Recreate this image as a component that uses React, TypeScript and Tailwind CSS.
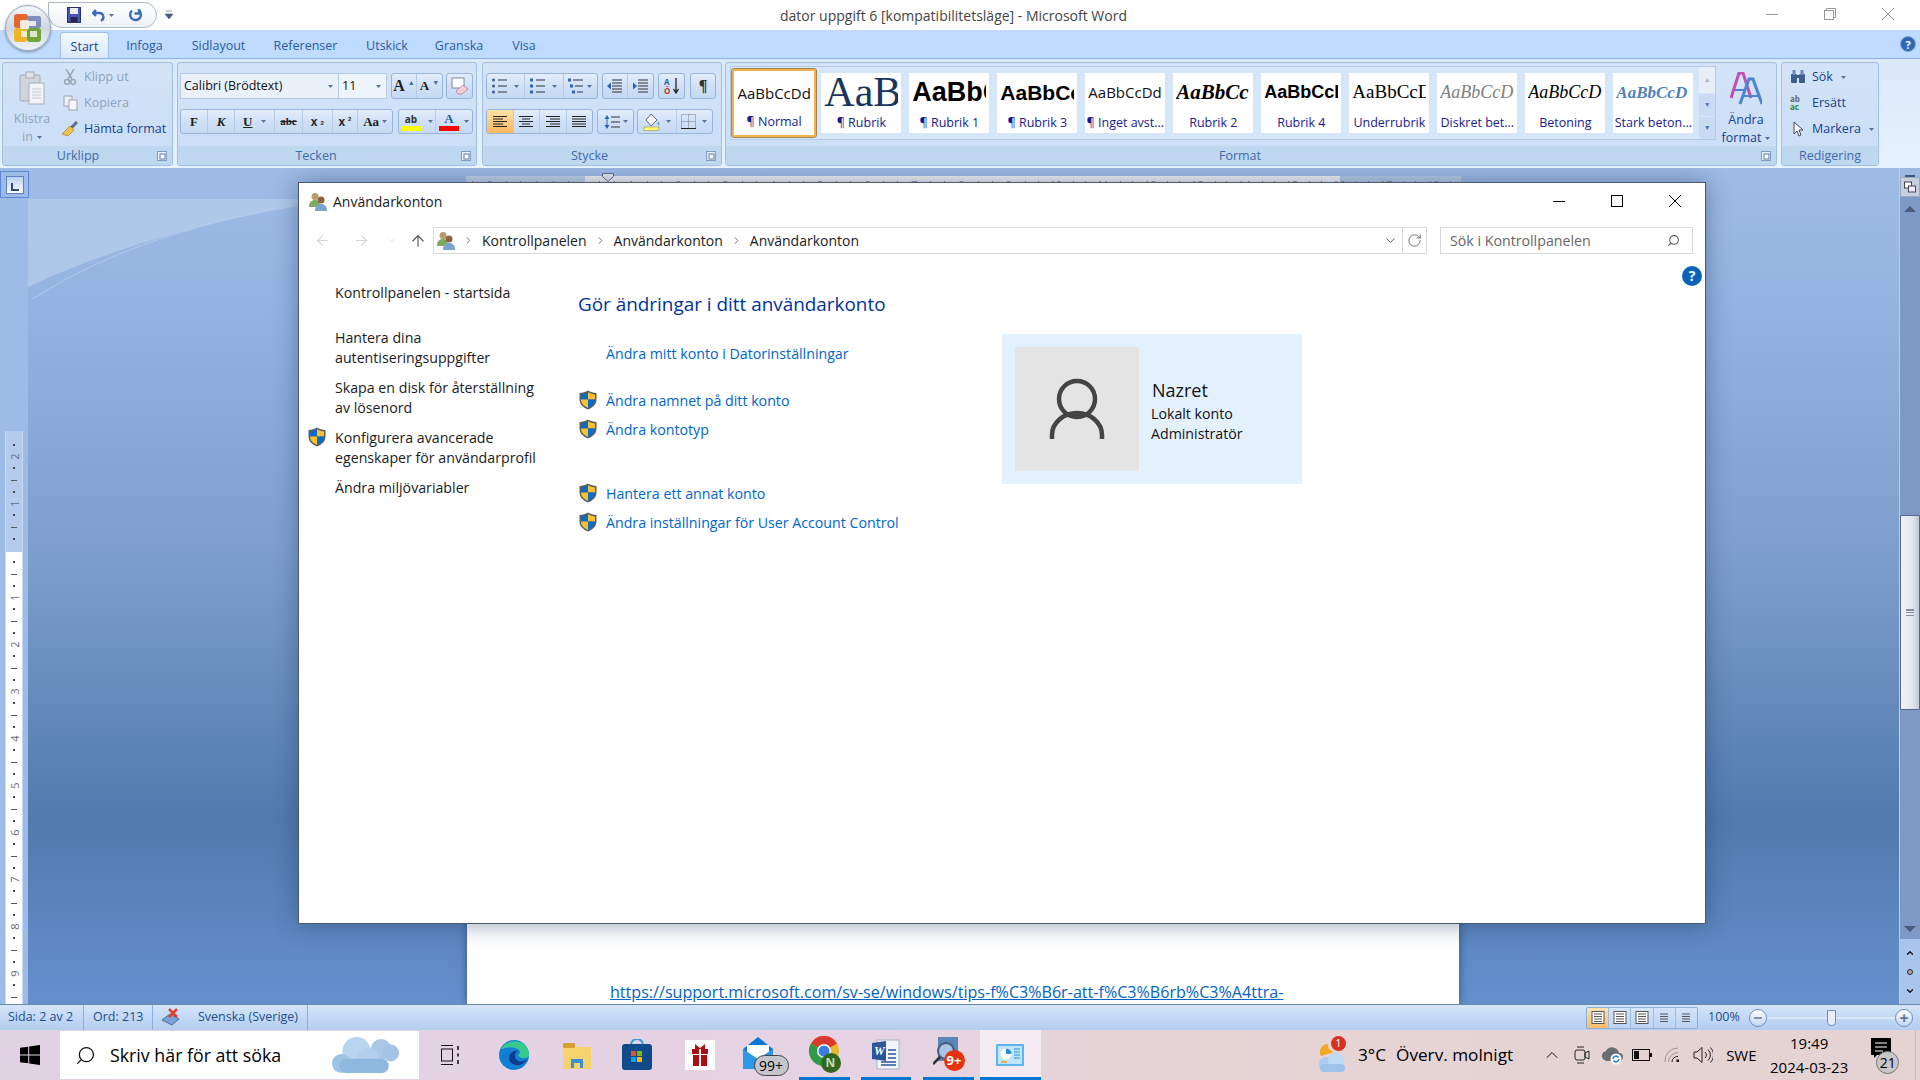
import React from 'react';
import { ArrowLeft, ArrowRight, ArrowUp, ChevronDown, ChevronRight, ChevronUp, Minus, RotateCw, Search } from 'lucide-react';

const Arrow = ({ className = '' }: { className?: string }) => (
  <svg width="5" height="3" viewBox="0 0 5 3" className={className}><path d="M0 0h5L2.5 3z" fill="#56739c" /></svg>
);

const CaptionMin = ({ color }: { color: string }) => (
  <svg width="12" height="12" viewBox="0 0 12 12"><path d="M0 6.500H12" stroke={color} /></svg>
);
const CaptionMax = ({ color }: { color: string }) => (
  <svg width="12" height="12" viewBox="0 0 12 12"><rect x="0.500" y="0.500" width="11" height="11" fill="none" stroke={color} /></svg>
);
const CaptionRestore = ({ color }: { color: string }) => (
  <svg width="12" height="12" viewBox="0 0 12 12"><rect x="0.500" y="2.500" width="9" height="9" fill="none" stroke={color} /><path d="M2.500 2.500V.5h9v9H9.500" fill="none" stroke={color} /></svg>
);
const CaptionClose = ({ color }: { color: string }) => (
  <svg width="12" height="12" viewBox="0 0 12 12"><path d="M0 0L12 12M12 0L0 12" stroke={color} /></svg>
);

const Lines = ({ kind }: { kind: 'left' | 'center' | 'right' | 'full' }) => {
  const rows = kind === 'left' ? [[0, 14], [0, 10], [0, 14], [0, 10], [0, 14]]
    : kind === 'center' ? [[0, 14], [3, 11], [0, 14], [3, 11], [0, 14]]
    : kind === 'right' ? [[0, 14], [4, 14], [0, 14], [4, 14], [0, 14]]
    : [[0, 14], [0, 14], [0, 14], [0, 14], [0, 14]];
  return (
    <svg width="14" height="13" viewBox="0 0 14 13">
      {rows.map((r, i) => <path key={i} d={`M${r[0]} ${1.5 + i * 2.5}H${r[1]}`} stroke="#222" strokeWidth="1" />)}
    </svg>
  );
};

const ListIcon = ({ kind }: { kind: 'bullet' | 'num' | 'multi' }) => (
  <svg width="16" height="16" viewBox="0 0 16 16">
    {[2, 8, 14].map((y, i) => (
      <g key={y}>
        <rect x={kind === 'multi' ? i * 2 : 0} y={y - 1.5} width="3" height="3" fill={kind === 'bullet' ? '#3b5e91' : '#3265b0'} rx={kind === 'bullet' ? 1.5 : 0} />
        <path d={`M${kind === 'multi' ? 5 + i * 2 : 6} ${y}H15`} stroke="#333" />
      </g>
    ))}
  </svg>
);

const IndentIcon = ({ dir }: { dir: 'out' | 'in' }) => (
  <svg width="16" height="14" viewBox="0 0 16 14">
    {[1, 4, 7, 10, 13].map((y) => <path key={y} d={`M5 ${y}H15`} stroke="#333" />)}
    <path d={dir === 'out' ? 'M0 7l4-3.5v7z' : 'M4 7L0 3.5v7z'} fill="#2a62b8" />
  </svg>
);

const Btn = ({ className = '', active = false, children }: { className?: string; active?: boolean; children?: React.ReactNode }) => (
  <div className={`flex h-full items-center justify-center gap-[3px] border-r border-[#b6cbe4] last:border-r-0 ${active ? 'bg-gradient-to-b from-[#fddfa4] to-[#fbb75f]' : ''} ${className}`}>
    {children}
  </div>
);

const ToolBox = ({ className = '', children }: { className?: string; children?: React.ReactNode }) => (
  <div className={`flex h-full overflow-hidden rounded-[3px] border border-[#98b5d9] bg-gradient-to-b from-[#e4eefb] via-[#cfe0f6] to-[#c6daf3] ${className}`}>
    {children}
  </div>
);

const Launcher = () => (
  <svg width="10" height="10" viewBox="0 0 10 10" className="shrink-0">
    <rect x="0.5" y="0.5" width="9" height="9" fill="#e8f1fc" stroke="#7f9dc4" />
    <rect x="3" y="3" width="5" height="5" fill="#fff" stroke="#5b7ba6" />
  </svg>
);

const Group = ({ className = '', labelCls = '', label, launcher = true, children }: { className?: string; labelCls?: string; label: string; launcher?: boolean; children?: React.ReactNode }) => (
  <div className={`flex h-[104px] shrink-0 flex-col overflow-hidden rounded-[3px] border border-[#a0bfe2] bg-gradient-to-b from-[#d4e4f8] to-[#c9ddf6] ${className}`}>
    <div className="h-[83px]">{children}</div>
    <div className={`flex h-[19px] items-center bg-[#c0d7f0] pt-[1px] text-[12.5px] text-[#3e6aaa] ${launcher ? 'pr-[5px]' : ''}`}>
      <span className={`flex-1 text-center ${labelCls}`}>{label}</span>
      {launcher && <Launcher />}
    </div>
  </div>
);

const OfficeOrb = () => (
  <div className="absolute left-[5px] top-[5px] z-20 flex h-[46px] w-[46px] items-center justify-center rounded-full border border-[#9aa9bd] bg-gradient-to-b from-[#f4f6f9] via-[#cfd7e1] to-[#eef3f8] shadow-[0_1px_3px_rgba(0,0,0,0.4)]">
    <svg width="30" height="30" viewBox="0 0 30 30">
      <rect x="1" y="1" width="14" height="14" rx="3" fill="#e2662d" />
      <rect x="14" y="3" width="14" height="12" rx="2" fill="#7d8fb8" />
      <rect x="1" y="15" width="13" height="14" rx="3" fill="#f0b429" />
      <rect x="14" y="15" width="14" height="14" rx="3" fill="#6fa53a" />
      <rect x="7" y="7" width="9" height="9" rx="1.5" fill="#fff" opacity="0.85" />
      <rect x="16" y="8" width="7" height="5" fill="#fff" opacity="0.8" />
      <rect x="8" y="18" width="6" height="6" fill="#fff" opacity="0.75" />
      <rect x="17" y="18" width="7" height="6" fill="#fff" opacity="0.75" />
    </svg>
  </div>
);

const SaveIcon = () => (
  <svg width="14" height="16" viewBox="0 0 14 16">
    <rect x="0.5" y="0.5" width="13" height="15" fill="#4a55b5" stroke="#2a2f7a" />
    <rect x="3" y="1" width="8" height="6" fill="#e9edf7" />
    <rect x="3.5" y="10" width="7" height="5" fill="#23264f" />
  </svg>
);

const Qat = () => (
  <div className="absolute left-[48px] top-[2px] z-10 flex h-[26px] w-[109px] items-center rounded-r-[13px] rounded-bl-[14px] border border-[#aeb9c8] bg-gradient-to-b from-white to-[#eef2f7] pl-[18px]">
    <SaveIcon />
    <svg width="14" height="14" viewBox="0 0 14 14" className="ml-[11px]"><path d="M4 2L1 5l3 3M1.5 5H8a4 4 0 0 1 1 7.6" fill="none" stroke="#3a6db8" strokeWidth="2.4" /></svg>
    <Arrow className="ml-[3px]" />
    <svg width="14" height="14" viewBox="0 0 14 14" className="ml-[15px]"><path d="M3 2.6a5.4 5.4 0 1 0 7.6.5M10 1v4.5H5.5" fill="none" stroke="#3a6db8" strokeWidth="2.4" /></svg>
  </div>
);

const tabs = [
  { label: 'Infoga', cls: 'w-[67px]' },
  { label: 'Sidlayout', cls: 'w-[81px]' },
  { label: 'Referenser', cls: 'w-[93px]' },
  { label: 'Utskick', cls: 'w-[70px]' },
  { label: 'Granska', cls: 'w-[74px]' },
  { label: 'Visa', cls: 'w-[56px]' },
];

const styles = [
  { preview: 'AaB', label: '¶ Rubrik', cls: "font-['Liberation_Serif',serif] text-[42px] text-[#17365d]" },
  { preview: 'AaBbC', label: '¶ Rubrik 1', cls: "font-['Liberation_Sans',sans-serif] text-[27px] font-bold text-black" },
  { preview: 'AaBbCc', label: '¶ Rubrik 3', cls: "font-['Liberation_Sans',sans-serif] text-[21px] font-bold text-black" },
  { preview: 'AaBbCcDd', label: '¶ Inget avst...', cls: 'text-[15px] text-[#111]' },
  { preview: 'AaBbCc', label: 'Rubrik 2', cls: "font-['Liberation_Serif',serif] text-[21px] font-bold italic text-black" },
  { preview: 'AaBbCcD', label: 'Rubrik 4', cls: "font-['Liberation_Sans',sans-serif] text-[18px] font-semibold text-black" },
  { preview: 'AaBbCcD', label: 'Underrubrik', cls: "font-['Liberation_Serif',serif] text-[19px] text-black" },
  { preview: 'AaBbCcD', label: 'Diskret bet...', cls: "font-['Liberation_Serif',serif] text-[18px] italic text-[#808080]" },
  { preview: 'AaBbCcD', label: 'Betoning', cls: "font-['Liberation_Serif',serif] text-[18px] italic text-black" },
  { preview: 'AaBbCcD', label: 'Stark beton...', cls: "font-['Liberation_Serif',serif] text-[17px] font-bold italic text-[#4f81bd]" },
];

const Ribbon = () => (
  <div className="flex h-[110px] shrink-0 gap-[4px] border-t border-[#8db2e3] bg-gradient-to-b from-[#dbe8f9] to-[#e6f2fd] pl-[2px] pt-[3px]">
    <Group label="Urklipp" labelCls="pr-[4px]" className="w-[171px]">
      <div className="flex h-full text-[12.5px] text-[#15428b]">
        <div className="flex w-[58px] flex-col items-center pt-[8px] leading-[18px] text-[#8ea3bd]">
          <svg width="26" height="34" viewBox="0 0 26 34">
            <rect x="1" y="4" width="20" height="26" rx="1" fill="#cfd5dd" stroke="#a5adb8" />
            <rect x="7" y="1" width="8" height="6" fill="#dfe3e8" stroke="#a5adb8" />
            <rect x="10" y="12" width="15" height="21" fill="#f2f4f7" stroke="#aab2bd" />
            <path d="M13 18h9M13 21h9M13 24h9M13 27h9" stroke="#c3c8cf" />
          </svg>
          <span className="mt-[5px]">Klistra</span>
          <span className="flex items-center gap-[4px]">in <Arrow /></span>
        </div>
        <div className="flex flex-col gap-[8px] pt-[5px]">
          <div className="flex h-[18px] items-center gap-[5px] text-[#8ea3bd]">
            <svg width="18" height="16" viewBox="0 0 18 16"><path d="M5 0l6 10M13 0L7 10" stroke="#9aa6b4" strokeWidth="1.5" /><circle cx="6" cy="13" r="2.4" fill="none" stroke="#9aa6b4" strokeWidth="1.5" /><circle cx="12" cy="13" r="2.4" fill="none" stroke="#9aa6b4" strokeWidth="1.5" /></svg>
            Klipp ut
          </div>
          <div className="flex h-[18px] items-center gap-[5px] text-[#8ea3bd]">
            <svg width="18" height="16" viewBox="0 0 18 16"><rect x="3" y="1" width="8" height="10" fill="#eef1f5" stroke="#9aa6b4" /><rect x="8" y="5" width="8" height="10" fill="#f7f8fa" stroke="#9aa6b4" /></svg>
            Kopiera
          </div>
          <div className="flex h-[18px] items-center gap-[5px]">
            <svg width="18" height="16" viewBox="0 0 18 16"><path d="M16 1l-7 7" stroke="#5d6f88" strokeWidth="3" /><path d="M9 5l4 4-6 6-6-2z" fill="#f2c14b" stroke="#a3812e" strokeWidth="0.7" /></svg>
            Hämta format
          </div>
        </div>
      </div>
    </Group>

    <Group label="Tecken" labelCls="pr-[7px]" className="w-[300px]">
      <div className="flex flex-col gap-[10px] pl-[2px] pt-[10px]">
        <div className="flex h-[26px]">
          <div className="flex w-[159px] items-center justify-between border border-[#b5cae3] bg-[#e9f1fb] px-[3px] pr-[5px] text-[12.5px] text-[#111]">Calibri (Brödtext) <Arrow /></div>
          <div className="flex w-[48px] items-center justify-between border border-l-0 border-[#b5cae3] bg-[#eef4fc] pl-[3px] pr-[5px] text-[12.5px] text-[#111]">11 <Arrow /></div>
          <ToolBox className="ml-[4px] w-[52px]">
            <Btn className="w-[26px] font-['Liberation_Serif',serif] text-[16px] font-bold text-[#222]">A<sup className="text-[7px] text-[#3a6db8]">▲</sup></Btn>
            <Btn className="w-[26px] font-['Liberation_Serif',serif] text-[13px] font-bold text-[#222]">A<sup className="text-[7px] text-[#3a6db8]">▼</sup></Btn>
          </ToolBox>
          <ToolBox className="ml-[3px] w-[27px]">
            <Btn className="w-full">
              <svg width="18" height="18" viewBox="0 0 18 18"><rect x="1" y="1" width="12" height="10" fill="#fff" stroke="#7a8aa0" /><path d="M5 14l7-6 5 4-6 5H7z" fill="#f6cdd6" stroke="#a57b86" strokeWidth="0.7" /></svg>
            </Btn>
          </ToolBox>
        </div>
        <div className="flex h-[25px]">
          <ToolBox className="w-[213px] text-[#222]">
            <Btn className="w-[27px] font-['Liberation_Serif',serif] text-[13px] font-bold">F</Btn>
            <Btn className="w-[28px] font-['Liberation_Serif',serif] text-[13px] font-bold italic">K</Btn>
            <Btn className="w-[40px] font-['Liberation_Serif',serif] text-[13px] font-bold underline">U<Arrow className="ml-[6px]" /></Btn>
            <Btn className="w-[28px] font-['Liberation_Serif',serif] text-[11px] font-bold line-through">abc</Btn>
            <Btn className="w-[30px] font-['Liberation_Sans',sans-serif] text-[12px] font-bold">x<sub className="text-[6px]">2</sub></Btn>
            <Btn className="w-[26px] font-['Liberation_Sans',sans-serif] text-[12px] font-bold">x<sup className="text-[6px]">2</sup></Btn>
            <Btn className="w-[34px] font-['Liberation_Serif',serif] text-[13px] font-bold">Aa<Arrow /></Btn>
          </ToolBox>
          <ToolBox className="ml-[5px] w-[75px]">
            <Btn className="w-[38px]">
              <span className="flex flex-col items-center text-[10px] font-bold leading-[14px] text-[#333]">ab<span className="h-[5px] w-[20px] bg-[#ffff00]" /></span>
              <Arrow className="ml-[4px]" />
            </Btn>
            <Btn className="w-[37px]">
              <span className="flex flex-col items-center font-['Liberation_Serif',serif] text-[13px] font-bold leading-[14px] text-[#1e5aa8]">A<span className="h-[5px] w-[20px] bg-[#ff0000]" /></span>
              <Arrow className="ml-[2px]" />
            </Btn>
          </ToolBox>
        </div>
      </div>
    </Group>

    <Group label="Stycke" labelCls="pr-[10px]" className="ml-[1px] w-[240px]">
      <div className="flex flex-col gap-[10px] pl-[3px] pt-[10px]">
        <div className="flex h-[26px]">
          <ToolBox className="w-[112px]">
            <Btn className="w-[39px]"><ListIcon kind="bullet" /><Arrow className="ml-[3px]" /></Btn>
            <Btn className="w-[39px]"><ListIcon kind="num" /><Arrow className="ml-[3px]" /></Btn>
            <Btn className="w-[34px]"><ListIcon kind="multi" /><Arrow /></Btn>
          </ToolBox>
          <ToolBox className="ml-[4px] w-[52px]">
            <Btn className="w-[26px]"><IndentIcon dir="out" /></Btn>
            <Btn className="w-[26px]"><IndentIcon dir="in" /></Btn>
          </ToolBox>
          <ToolBox className="ml-[4px] w-[27px]">
            <Btn className="w-full">
              <svg width="16" height="18" viewBox="0 0 16 18"><text x="0" y="8" fontSize="8" fontWeight="700" fill="#2a5da8">A</text><text x="0" y="17" fontSize="8" fontWeight="700" fill="#b5382f">Ö</text><path d="M12 1v14M9.5 12l2.5 4 2.5-4" fill="none" stroke="#222" strokeWidth="1.3" /></svg>
            </Btn>
          </ToolBox>
          <ToolBox className="ml-[5px] w-[26px]"><Btn className="w-full font-['Liberation_Serif',serif] text-[16px] font-bold text-[#333]">¶</Btn></ToolBox>
        </div>
        <div className="flex h-[25px]">
          <ToolBox className="w-[107px]">
            <Btn className="w-[27px]" active><Lines kind="left" /></Btn>
            <Btn className="w-[27px]"><Lines kind="center" /></Btn>
            <Btn className="w-[27px]"><Lines kind="right" /></Btn>
            <Btn className="w-[26px]"><Lines kind="full" /></Btn>
          </ToolBox>
          <ToolBox className="ml-[4px] w-[37px]">
            <Btn className="w-full">
              <svg width="16" height="16" viewBox="0 0 16 16"><path d="M3 1L.5 5h5zM3 15L.5 11h5z" fill="#2a62b8" /><path d="M3 5v6" stroke="#2a62b8" /><path d="M7 3h9M7 8h9M7 13h9" stroke="#333" /></svg>
              <Arrow />
            </Btn>
          </ToolBox>
          <ToolBox className="ml-[3px] w-[76px]">
            <Btn className="w-[40px]">
              <svg width="18" height="18" viewBox="0 0 18 18"><path d="M8 1l6 6-6 6-5-6z" fill="#f4f6f9" stroke="#5c6b7f" /><path d="M15 8c1 2 2 3 1 4s-2-1-1-4z" fill="#5d87c8" /><rect x="1" y="14" width="15" height="3.5" fill="#ffff66" stroke="#8a8a7a" strokeWidth="0.6" /></svg>
              <Arrow className="ml-[2px]" />
            </Btn>
            <Btn className="w-[36px]">
              <svg width="15" height="15" viewBox="0 0 15 15"><path d="M.5.5h14v14H.5zM7.5.5v14M.5 7.5h14" fill="none" stroke="#778" strokeDasharray="1 1" /><path d="M0 14.5h15" stroke="#222" /></svg>
              <Arrow className="ml-[3px]" />
            </Btn>
          </ToolBox>
        </div>
      </div>
    </Group>

    <Group label="Format" labelCls="pr-[7px]" className="-ml-[1px] w-[1052px]">
      <div className="flex pl-[4px] pt-[3px]">
        <div className="flex h-[74px] w-[986px] items-center border border-[#b4cbe6] bg-[#d6e6f9]">
          <div className="ml-[1px] flex h-[68px] w-[86px] flex-col items-center overflow-hidden rounded-[2px] border-2 border-[#f5b44a] bg-white outline outline-[#a28354]">
            <span className="mt-[11px] h-[22px] text-[15px] leading-[22px] text-[#111]">AaBbCcDd</span>
            <span className="mt-[9px] text-[12.5px] text-[#1a1a8c]">¶ Normal</span>
          </div>
          <div className="ml-[5px] flex gap-[8px]">
            {styles.map((s) => (
              <div key={s.label} className="flex h-[60px] w-[80px] flex-col items-center bg-white">
                <div className="flex h-[39px] w-[74px] items-center overflow-hidden whitespace-nowrap">
                  <span className={s.cls}>{s.preview}</span>
                </div>
                <span className="mt-[2px] whitespace-nowrap text-[12.5px] text-[#1a1a8c]">{s.label}</span>
              </div>
            ))}
          </div>
          <div className="ml-[6px] flex h-full w-[16px] flex-col gap-[1px]">
            <div className="flex h-[26px] items-center justify-center rounded-t-[2px] bg-[#e6eefa] text-[7px] text-[#aabbd2]">▲</div>
            <div className="flex h-[22px] items-center justify-center bg-[#c9dcf4] text-[7px] text-[#5679ad]">▼</div>
            <div className="flex flex-1 items-center justify-center rounded-b-[2px] bg-[#c9dcf4] text-[7px] text-[#5679ad]">▼</div>
          </div>
        </div>
        <div className="flex w-[60px] flex-col items-center pt-[6px] text-[12.5px] leading-[18px] text-[#15428b]">
          <svg width="32" height="34" viewBox="0 0 32 34">
            <path d="M1 26L9 1h4l8 25" fill="none" stroke="#c04fb5" strokeWidth="3" />
            <path d="M10 32L19 7h4l9 25" fill="none" stroke="#4a86d0" strokeWidth="3" />
            <path d="M5 18h11M14 24h14" stroke="#4a86d0" strokeWidth="2" />
          </svg>
          <span className="mt-[5px]">Ändra</span>
          <span className="flex items-center gap-[4px]">format <Arrow /></span>
        </div>
      </div>
    </Group>

    <Group label="Redigering" launcher={false} className="w-[98px]">
      <div className="flex flex-col gap-[8px] pl-[8px] pt-[5px] text-[12.5px] text-[#15428b]">
        <div className="flex h-[18px] items-center gap-[6px]">
          <svg width="16" height="14" viewBox="0 0 16 14"><rect x="1" y="4" width="6" height="9" rx="1" fill="#3d5d8c" /><rect x="9" y="4" width="6" height="9" rx="1" fill="#3d5d8c" /><rect x="2.5" y="0" width="3" height="5" fill="#6d8ab3" /><rect x="10.5" y="0" width="3" height="5" fill="#6d8ab3" /><rect x="6" y="5" width="4" height="3" fill="#3d5d8c" /></svg>
          Sök <Arrow className="ml-[2px]" />
        </div>
        <div className="flex h-[18px] items-center gap-[6px]">
          <span className="w-[16px] text-[8px] font-bold leading-[8px] text-[#667]">ab<br /><span className="text-[#2f8a3b]">ac</span></span>
          Ersätt
        </div>
        <div className="flex h-[18px] items-center gap-[6px]">
          <svg width="16" height="16" viewBox="0 0 16 16"><path d="M4 1v12l3-3 2 5 2-1-2-5h4z" fill="#fff" stroke="#445" /></svg>
          Markera <Arrow className="ml-[2px]" />
        </div>
      </div>
    </Group>
  </div>
);

const rulerNums: (number | null)[] = [2, 1, null, 1, 2, 3, 4, 5, 6, 7, 8, 9];
const hRulerNums: (number | null)[] = [2, 1, null, 1, 2, 3, 4, 5, 6, 7, 8, 9, 10, 11, 12, 13, 14, 15, 16, 17, 18];

const VRuler = () => (
  <div className="ml-[5px] flex h-[573px] w-[18px] flex-col items-center overflow-hidden border-x border-[#c9d8ee] bg-[linear-gradient(180deg,#b3ccee_0,#b3ccee_121px,#ffffff_121px)] pt-[8px] text-[11px] text-[#5d6b86]">
    <div className="flex h-[11.75px] shrink-0 items-center"><span className="h-[2px] w-[2px] bg-[#444]" /></div>
    {rulerNums.map((n, i) => (
      <React.Fragment key={i}>
        <div className="flex h-[11.75px] shrink-0 items-center justify-center"><span className="-rotate-90 leading-none">{n}</span></div>
        <div className="flex h-[11.75px] shrink-0 items-center"><span className="h-[2px] w-[2px] bg-[#444]" /></div>
        <div className="flex h-[11.75px] shrink-0 items-center"><span className="h-[1px] w-[6px] bg-[#555]" /></div>
        <div className="flex h-[11.75px] shrink-0 items-center"><span className="h-[2px] w-[2px] bg-[#444]" /></div>
      </React.Fragment>
    ))}
  </div>
);

const HRuler = () => (
  <div className="relative ml-[438px] mt-[8px] h-[23px] w-[995px]">
    <div className="flex h-full overflow-hidden bg-[linear-gradient(90deg,#c4d4ea_0,#c4d4ea_119px,#f2f4f7_119px,#f2f4f7_874px,#b8cbe6_874px)] text-[11px] leading-[16px] text-[#7c879c]">
      {hRulerNums.map((n, i) => (
        <div key={i} className="flex w-[47.2px] shrink-0 items-start justify-around">
          <span className="mt-[5px] h-[1px] w-[1px] bg-[#888]" />
          <span className="mt-[1px]">{n}</span>
          <span className="mt-[5px] h-[1px] w-[1px] bg-[#888]" />
        </div>
      ))}
    </div>
    <svg width="12" height="9" viewBox="0 0 12 9" className="absolute left-[136px] top-[-3px]"><path d="M.5.5h11v3L6 8.500.5 3.500z" fill="#e8eef7" stroke="#5d6b86" /></svg>
  </div>
);

const Shield = ({ className = '' }: { className?: string }) => (
  <svg width="20" height="20" viewBox="0 0 20 20" className={`-mt-[1px] ${className}`}>
    <path d="M10 .5C7.500 2 4.500 3 1.500 3v6.500c0 5 4 8.200 8.500 10 4.500-1.800 8.500-5 8.500-10V3c-3 0-6-1-8.500-2.500z" fill="#5b6066" />
    <path d="M10 2.200C7.800 3.400 5.300 4.200 3 4.400v5.100h7z" fill="#0a6cc4" />
    <path d="M10 2.200c2.200 1.200 4.700 2 7 2.200v5.100h-7z" fill="#fdc030" />
    <path d="M3 9.500h7v8.400c-3.500-1.500-7-4-7-8.400z" fill="#fdc030" />
    <path d="M17 9.500h-7v8.400c3.500-1.500 7-4 7-8.400z" fill="#0a6cc4" />
  </svg>
);

const UsersIcon = () => (
  <svg width="19" height="19" viewBox="0 0 19 19">
    <circle cx="6" cy="4.500" r="3.500" fill="#b89b6b" />
    <path d="M0 15c0-5 2.500-7 6-7s5 2 5 7z" fill="#7fa95d" />
    <circle cx="12" cy="8" r="3.500" fill="#8d6244" />
    <path d="M6 19c0-5 2.500-7 6-7s6 2 6 7z" fill="#7ba3d4" />
  </svg>
);

const sideLinks = [
  { text: ['Hantera dina', 'autentiseringsuppgifter'], cls: 'mt-[25px]' },
  { text: ['Skapa en disk för återställning', 'av lösenord'], cls: 'mt-[10px]' },
  { text: ['Konfigurera avancerade', 'egenskaper för användarprofil'], cls: 'mt-[10px]', shield: true },
  { text: ['Ändra miljövariabler'], cls: 'mt-[10px]' },
];

const mainLinks = [
  { text: 'Ändra mitt konto i Datorinställningar', cls: 'mt-[27px]', shield: false },
  { text: 'Ändra namnet på ditt konto', cls: 'mt-[27px]', shield: true },
  { text: 'Ändra kontotyp', cls: 'mt-[9px]', shield: true },
  { text: 'Hantera ett annat konto', cls: 'mt-[44px]', shield: true },
  { text: 'Ändra inställningar för User Account Control', cls: 'mt-[9px]', shield: true },
];

const AccountsWindow = () => (
  <div className="absolute left-[298px] top-[14px] z-10 flex h-[742px] w-[1408px] flex-col border border-[#4b5a6e] bg-white text-[14.2px] text-[#1b1b1b] shadow-[0_0_22px_rgba(30,50,90,0.45)]">
    <div className="flex h-[36px] shrink-0 items-center pl-[10px]">
      <UsersIcon />
      <span className="ml-[5px] text-[14px]">Användarkonton</span>
      <div className="ml-auto mr-[1px] flex items-center">
        <div className="flex w-[58px] justify-center"><CaptionMin color="#000" /></div>
        <div className="flex w-[58px] justify-center"><CaptionMax color="#000" /></div>
        <div className="flex w-[58px] justify-center"><CaptionClose color="#000" /></div>
      </div>
    </div>
    <div className="mt-[8px] flex h-[27px] shrink-0 items-center">
      <div className="ml-[15px] flex w-[119px] items-center">
        <ArrowLeft size={17} strokeWidth={1.5} color="#d5d5d5" />
        <ArrowRight size={17} strokeWidth={1.5} color="#d5d5d5" className="ml-[22px]" />
        <ChevronDown size={11} strokeWidth={1.5} color="#d5d5d5" className="ml-[16px]" />
        <ArrowUp size={18} strokeWidth={1.5} color="#555" className="ml-[12px]" />
      </div>
      <div className="flex h-full w-[994px] items-center border border-[#d9d9d9] text-[14px]">
        <div className="ml-[3px]"><UsersIcon /></div>
        <ChevronRight size={11} color="#666" className="ml-[7px]" />
        <span className="ml-[8px]">Kontrollpanelen</span>
        <ChevronRight size={11} color="#666" className="ml-[8px]" />
        <span className="ml-[8px]">Användarkonton</span>
        <ChevronRight size={11} color="#666" className="ml-[8px]" />
        <span className="ml-[8px]">Användarkonton</span>
        <div className="ml-auto flex h-full items-center">
          <ChevronDown size={15} strokeWidth={1.5} color="#555" />
          <div className="ml-[4px] flex h-full w-[24px] items-center justify-center border-l border-[#d9d9d9]"><RotateCw size={15} strokeWidth={1.5} color="#666" /></div>
        </div>
      </div>
      <div className="ml-[13px] flex h-full w-[253px] items-center justify-between border border-[#d9d9d9] pl-[9px] pr-[12px] text-[#666]">
        Sök i Kontrollpanelen
        <Search size={13} strokeWidth={2} color="#555" className="-scale-x-100" />
      </div>
    </div>
    <div className="flex flex-1">
      <div className="w-[279px] shrink-0 pl-[8px] pt-[29px] leading-[20px]">
        <div className="pl-[28px]">Kontrollpanelen - startsida</div>
        {sideLinks.map((l) => (
          <div key={l.text[0]} className={`flex ${l.cls}`}>
            <div className="w-[28px] shrink-0">{l.shield && <Shield />}</div>
            <div>{l.text.map((t) => <div key={t}>{t}</div>)}</div>
          </div>
        ))}
      </div>
      <div className="w-[424px] shrink-0 pt-[37px] leading-[20px]">
        <h1 className="text-[18.9px] leading-[26px] text-[#003399]">Gör ändringar i ditt användarkonto</h1>
        {mainLinks.map((l) => (
          <div key={l.text} className={`flex whitespace-nowrap text-[#0066cc] ${l.cls}`}>
            <div className="w-[28px] shrink-0">{l.shield && <Shield />}</div>
            {l.text}
          </div>
        ))}
      </div>
      <div className="mt-[80px] flex h-[150px] w-[300px] bg-[#e3f1fc] p-[13px]">
        <div className="flex h-[124px] w-[124px] shrink-0 items-center justify-center bg-[#e4e4e4]">
          <svg width="60" height="64" viewBox="0 0 60 64">
            <circle cx="30" cy="22" r="18" fill="none" stroke="#444" strokeWidth="4.500" />
            <path d="M5 62v-4a25 22 0 0 1 50 0v4" fill="none" stroke="#444" strokeWidth="4.500" />
          </svg>
        </div>
        <div className="ml-[12px] pt-[31px] leading-[20px] text-[#111]">
          <div className="pl-[1px] text-[18px] leading-[24px]">Nazret</div>
          <div className="mt-[1.500px]">Lokalt konto</div>
          <div>Administratör</div>
        </div>
      </div>
      <div className="ml-auto mr-[3px] mt-[12px] flex h-[20px] w-[20px] items-center justify-center rounded-full bg-[#0a63b8] text-[14px] font-bold leading-none text-white">?</div>
    </div>
  </div>
);

const VScroll = () => (
  <div className="flex w-[21px] shrink-0 flex-col border-l border-[#b6cdee] bg-[#7d9ac6]">
    <div className="flex h-[9px] items-end justify-center bg-[#9cb9e2]"><span className="h-[2px] w-[10px] bg-[#47597d]" /></div>
    <div className="flex h-[20px] items-center justify-center border border-[#9aa9c0] bg-[#c6cfdf]">
      <svg width="12" height="12" viewBox="0 0 12 12"><rect x="0.5" y="1" width="7" height="6" fill="#fff" stroke="#445" /><rect x="4.500" y="5" width="7" height="6" fill="#eef" stroke="#445" /></svg>
    </div>
    <div className="flex h-[24px] items-center justify-center"><svg width="12" height="6" viewBox="0 0 12 6"><path d="M6 0l6 6H0z" fill="#4a5b7c" /></svg></div>
    <div className="mt-[294px] flex h-[195px] flex-col items-center justify-center rounded-[1px] border border-[#55688c] bg-[linear-gradient(90deg,#f0f2f7,#e4e7ef_60%,#c1c9d6)]">
      <span className="h-[7px] w-[8px] border-y border-[#8a8f9b] bg-[linear-gradient(180deg,#8a8f9b_0,#8a8f9b_20%,transparent_20%,transparent_40%,#8a8f9b_40%,#8a8f9b_60%,transparent_60%)]" />
    </div>
    <div className="mt-auto flex h-[20px] items-center justify-center"><svg width="12" height="6" viewBox="0 0 12 6"><path d="M6 6L12 0H0z" fill="#4a5b7c" /></svg></div>
    <div className="flex h-[65px] flex-col items-center justify-around bg-[#a9c5ec] py-[3px]">
      <ChevronUp size={10} strokeWidth={3} color="#111" />
      <span className="h-[6px] w-[6px] rounded-full border border-[#222] bg-[#aaa]" />
      <ChevronDown size={10} strokeWidth={3} color="#111" />
    </div>
  </div>
);

const DocArea = () => (
  <div className="relative flex min-h-0 flex-1 overflow-hidden bg-[linear-gradient(180deg,#9ebce5_0,#92b2e0_18%,#7fa0cd_45%,#517aae_78%,#6490cc_100%)]">
    <svg className="absolute left-[28px] top-[31px] h-[100px] w-[280px]" viewBox="0 0 280 100" preserveAspectRatio="none">
      <path d="M0 0H280V4C180 22 80 50 0 88z" fill="#b3cceb" opacity="0.8" />
      <path d="M0 103C80 50 180 20 280 5" fill="none" stroke="#bdd2ee" opacity="0.7" />
    </svg>
    <div className="relative flex w-[28px] shrink-0 flex-col bg-[#9cbbe6]">
      <div className="mt-[3px] flex h-[28px] w-[29px] items-center justify-center self-start border border-[#5f87d8]">
        <div className="flex h-[18px] w-[18px] items-end justify-center border border-[#5f7fc4] bg-gradient-to-b from-[#b9d0f0] to-white pb-[2px]">
          <span className="h-[8px] w-[8px] border-b-2 border-l-2 border-[#2d4a78]" />
        </div>
      </div>
      <div className="mt-[233px]"><VRuler /></div>
    </div>
    <div className="relative flex min-w-0 flex-1 flex-col">
      <HRuler />
      <div className="ml-[439px] flex w-[992px] flex-1 flex-col justify-end bg-white pb-[1px] pl-[143px] shadow-[0_0_8px_rgba(20,40,80,0.6)]">
        <span className="whitespace-nowrap text-[16.1px] leading-[22px] text-[#0563c1] underline">https://support.microsoft.com/sv-se/windows/tips-f%C3%B6r-att-f%C3%B6rb%C3%A4ttra-</span>
      </div>
    </div>
    <VScroll />
    <AccountsWindow />
  </div>
);

const viewIcons = ['print', 'read', 'web', 'outline', 'draft'];

const StatusBar = () => (
  <div className="flex h-[26px] shrink-0 items-center border-t border-[#6b88a8] bg-[linear-gradient(180deg,#d4e5fa_0,#c6dbf7_40%,#b3cdf0_100%)] text-[12.5px] text-[#234e87]">
    <div className="flex h-full w-[84px] items-center border-r border-[#8eaed7] pl-[8px]">Sida: 2 av 2</div>
    <div className="flex h-full w-[69px] items-center border-r border-[#8eaed7] pl-[9px]">Ord: 213</div>
    <div className="flex h-full w-[155px] items-center border-r border-[#8eaed7] pl-[8px]">
      <svg width="20" height="20" viewBox="0 0 20 20"><path d="M1 12l8-6 9 5-7 6z" fill="#7ba3d8" stroke="#4b6f9f" /><path d="M8 1l8 8M16 1L8 9" stroke="#e2412e" strokeWidth="2.500" /></svg>
      <span className="ml-[17px] whitespace-nowrap">Svenska (Sverige)</span>
    </div>
    <div className="ml-[1278px] flex h-[22px] w-[112px] overflow-hidden rounded-[2px] border border-[#8eaed7]">
      {viewIcons.map((v, i) => (
        <div key={v} className={`flex h-full flex-1 items-center justify-center border-r border-[#9dbbe0] last:border-r-0 ${i === 0 ? 'bg-gradient-to-b from-[#fde3ae] to-[#fbbc66]' : 'bg-gradient-to-b from-[#d4e4f9] to-[#bcd3f2]'}`}>
          <svg width="14" height="13" viewBox="0 0 14 13">
            <rect x="1" y="0.5" width="12" height="12" fill={i < 3 ? '#fff' : 'none'} stroke={i < 3 ? '#555' : 'none'} />
            <path d="M3 3h8M3 5.500h8M3 8h8M3 10.500h8" stroke="#555" />
          </svg>
        </div>
      ))}
    </div>
    <span className="ml-[10px] w-[30px]">100%</span>
    <div className="ml-[11px] flex h-[18px] w-[18px] items-center justify-center rounded-full border border-[#6f8fb9] bg-gradient-to-b from-white to-[#c2d6f1]"><Minus size={12} strokeWidth={3} color="#5d7596" /></div>
    <div className="flex h-[2px] w-[128px] items-center justify-center bg-[#dce8f8]">
      <span className="h-[16px] w-[9px] rounded-b-[4px] border border-[#6f8fb9] bg-[#e9eef6]" />
    </div>
    <div className="flex h-[18px] w-[18px] items-center justify-center rounded-full border border-[#6f8fb9] bg-gradient-to-b from-white to-[#c2d6f1]"><span className="text-[16px] font-bold leading-none text-[#5d7596]">+</span></div>
  </div>
);

const WinLogo = () => (
  <svg width="20" height="20" viewBox="0 0 20 20"><path d="M0 2.800L8.200 1.700V9.500H0zM9.200 1.500L20 0V9.500H9.200zM0 10.500H8.200V18.300L0 17.200zM9.200 10.500H20V20L9.200 18.500z" fill="#000" /></svg>
);

const CloudArt = () => (
  <svg width="68" height="38" viewBox="0 0 72 40">
    <circle cx="52" cy="14" r="11" fill="#a9c8e8" />
    <circle cx="62" cy="18" r="9" fill="#a3c4e6" />
    <circle cx="26" cy="16" r="15" fill="#b8d5f2" />
    <circle cx="10" cy="29" r="10" fill="#9dc2e6" />
    <circle cx="38" cy="24" r="12" fill="#b2d0ee" />
    <rect x="8" y="24" width="52" height="15" rx="7" fill="#8fb8de" />
  </svg>
);

const Edge = () => (
  <svg width="30" height="30" viewBox="0 0 30 30">
    <circle cx="15" cy="15" r="15" fill="#1280d2" />
    <path d="M2 9C6 1 18-1 25 4c4 3 5 8 5 12-2 3-10 3-11-1 3-1 3-6-3-7C10 6 5 9 2 9z" fill="#38c98f" />
    <path d="M10 18c0 5 5 8 11 7 3-1 6-3 7-6-4 4-11 3-12-2-.5-3 1-5 3-6-5-1-9 3-9 7z" fill="#0b3f8e" />
  </svg>
);

const Folder = () => (
  <svg width="28" height="28" viewBox="0 0 28 28">
    <path d="M0 3h11l3 3h14v22H0z" fill="#f6d36c" />
    <rect y="2" width="12" height="5" rx="1" fill="#d4a02f" />
    <path d="M8 27V18h12v9h-3v-5h-6v5z" fill="#3a8fd9" />
  </svg>
);

const Store = () => (
  <svg width="30" height="32" viewBox="0 0 30 32">
    <path d="M9 6a6 6 0 0 1 12 0" fill="none" stroke="#2aa0e0" strokeWidth="2" />
    <rect y="5" width="30" height="26" rx="3" fill="#114a8b" />
    <rect x="9" y="12" width="5" height="5" fill="#f25022" />
    <rect x="15" y="12" width="5" height="5" fill="#7fba00" />
    <rect x="9" y="18" width="5" height="5" fill="#00a4ef" />
    <rect x="15" y="18" width="5" height="5" fill="#ffb900" />
  </svg>
);

const Gift = () => (
  <div className="flex h-[30px] w-[30px] items-center justify-center bg-white">
    <svg width="16" height="22" viewBox="0 0 16 22">
      <path d="M3 0l5 4 5-4v5H3z" fill="#b01217" />
      <rect y="5" width="16" height="5" fill="#a80f14" />
      <rect x="1" y="11" width="14" height="11" fill="#a80f14" />
      <path d="M8 5v17" stroke="#fff" strokeWidth="2" />
    </svg>
  </div>
);

const Mail = () => (
  <div className="relative h-[36px] w-[46px]">
    <svg width="30" height="32" viewBox="0 0 30 32">
      <path d="M0 12L15 0l15 12v20H0z" fill="#0a78d4" />
      <path d="M4 8h22v10l-11 6-11-6z" fill="#fff" />
      <path d="M0 12l15 10 15-10v20H0z" fill="#2a9be8" />
    </svg>
    <span className="absolute bottom-[-3px] right-0 flex h-[21px] w-[35px] items-center justify-center rounded-full border border-[#444] bg-[#c4c6cb] text-[14px] text-black">99+</span>
  </div>
);

const Chrome = () => (
  <div className="relative h-[38px] w-[32px]">
    <svg width="30" height="30" viewBox="0 0 30 30">
      <circle cx="15" cy="15" r="15" fill="#e8b92c" />
      <path d="M15 15L2 7.500A15 15 0 0 1 28 7.500z" fill="#d93a2c" />
      <path d="M15 15L2 7.500A15 15 0 0 0 15 30z" fill="#2f9a4a" />
      <circle cx="15" cy="15" r="7" fill="#fff" />
      <circle cx="15" cy="15" r="5.500" fill="#3a7de2" />
    </svg>
    <span className="absolute bottom-[1px] right-0 flex h-[20px] w-[20px] items-center justify-center rounded-full bg-[#33691e] text-[12px] font-bold text-[#c7d9b8]">N</span>
  </div>
);

const WordIcon = () => (
  <svg width="28" height="32" viewBox="0 0 28 32">
    <rect x="5" y="1" width="22" height="29" fill="#f2f6fb" stroke="#a5b4c7" />
    <path d="M16 11h8M16 15h8M16 19h8M9 23h15M9 26h15" stroke="#2b579a" strokeWidth="1.500" />
    <path d="M0 4l14-2v20L0 20z" fill="#2b579a" />
    <text x="2" y="16" fontSize="12" fontWeight="700" fontStyle="italic" fill="#fff" fontFamily="Liberation Serif">W</text>
  </svg>
);

const Snip = () => (
  <div className="relative h-[36px] w-[32px]">
    <svg width="30" height="32" viewBox="0 0 30 32">
      <rect x="5" y="0" width="20" height="24" fill="#5d86b8" />
      <circle cx="13" cy="14" r="8" fill="#a9c4e4" stroke="#445a7c" strokeWidth="2" />
      <path d="M7 20l-7 7" stroke="#333" strokeWidth="2.500" />
    </svg>
    <span className="absolute bottom-[2px] right-0 flex h-[21px] w-[21px] items-center justify-center rounded-full bg-[#e6330f] text-[13px] font-bold text-white">9+</span>
  </div>
);

const CpIcon = () => (
  <svg width="28" height="22" viewBox="0 0 28 22">
    <rect width="28" height="22" rx="1" fill="#5ab6ec" />
    <rect x="2" y="2" width="24" height="18" fill="#bfe5fa" />
    <circle cx="10" cy="10" r="5.500" fill="#fff" />
    <path d="M10 10V4.500a5.500 5.500 0 0 1 5.500 5.500z" fill="#2a8fd4" />
    <path d="M18 5h6M18 8h6M18 11h6M18 14h6" stroke="#2a8fd4" />
    <path d="M5 18h6" stroke="#e89a2b" strokeWidth="1.500" />
  </svg>
);

const runningBar = 'absolute bottom-0 left-0 h-[3px] w-full bg-[#0078d4]';

const Taskbar = () => (
  <div className="flex h-[50px] shrink-0 items-center overflow-hidden bg-[linear-gradient(90deg,#e1d2e3,#e6d3e4_45%,#e6d4d6_60%,#e5d3d3)] text-black">
    <div className="flex w-[60px] justify-center"><WinLogo /></div>
    <div className="flex h-[48px] w-[359px] items-center bg-white pl-[15px] pr-[19px]">
      <Search size={21} strokeWidth={1.400} color="#111" className="-scale-x-100" />
      <span className="ml-[14px] whitespace-nowrap text-[17.8px]">Skriv här för att söka</span>
      <div className="ml-auto"><CloudArt /></div>
    </div>
    <div className="flex w-[62px] justify-center">
      <svg width="20" height="20" viewBox="0 0 20 20"><path d="M1 .5h12M1 19.500h12" stroke="#111" /><rect x="1.500" y="4" width="11" height="12" fill="none" stroke="#111" /><path d="M18 1v4M18 8.500v3M18 15v4" stroke="#111" strokeWidth="1.500" /></svg>
    </div>
    <div className="flex w-[66px] justify-center"><Edge /></div>
    <div className="flex w-[59px] justify-center"><Folder /></div>
    <div className="flex w-[62px] justify-center"><Store /></div>
    <div className="flex w-[64px] justify-center"><Gift /></div>
    <div className="flex w-[67px] justify-center"><Mail /></div>
    <div className="relative flex h-full w-[51px] items-center justify-center"><Chrome /><span className={runningBar} /></div>
    <div className="relative ml-[11px] flex h-full w-[50px] items-center justify-center"><WordIcon /><span className={runningBar} /></div>
    <div className="relative ml-[12px] flex h-full w-[51px] items-center justify-center"><Snip /><span className={runningBar} /></div>
    <div className="relative ml-[6px] flex h-full w-[61px] items-center justify-center bg-[#f3ebf1] pr-[2px]"><CpIcon /><span className={runningBar} /></div>

    <div className="relative ml-[277px] h-[34px] w-[28px]">
      <svg width="28" height="34" viewBox="0 0 28 34">
        <path d="M3 18a8 8 0 0 1 7-12 7 7 0 0 0 6 8z" fill="#f5a623" />
        <circle cx="8" cy="26" r="7" fill="#a9cdf0" />
        <circle cx="18" cy="23" r="8" fill="#bcd9f5" />
        <rect x="2" y="26" width="25" height="8" rx="4" fill="#9cc4ea" />
      </svg>
      <span className="absolute right-0 top-[-2px] flex h-[15px] w-[15px] items-center justify-center rounded-full bg-[#d8321f] text-[11px] text-white">1</span>
    </div>
    <span className="ml-[12px] whitespace-nowrap text-[17.2px]">3°C</span>
    <span className="ml-[10px] whitespace-nowrap text-[17.2px]">Överv. molnigt</span>
    <div className="ml-[24px] flex w-[30px] justify-center"><ChevronUp size={20} strokeWidth={1.200} color="#111" /></div>
    <div className="flex w-[30px] justify-center">
      <svg width="16" height="20" viewBox="0 0 16 20"><rect x="1" y="5" width="10" height="10" rx="2" fill="none" stroke="#222" /><path d="M11 8l4-2v8l-4-2zM3 2h7M3 18h7" fill="none" stroke="#222" /></svg>
    </div>
    <div className="flex w-[30px] justify-center">
      <svg width="22" height="20" viewBox="0 0 22 20"><path d="M2 14a5 5 0 0 1 3-8 7 7 0 0 1 13 2 4 4 0 0 1 0 8H5z" fill="#6a6d72" /><circle cx="15" cy="14" r="5.500" fill="#fff" /><path d="M12 14a3 3 0 0 1 5.500-1.500M18 14a3 3 0 0 1-5.500 1.500" fill="none" stroke="#1f86e0" strokeWidth="1.500" /></svg>
    </div>
    <div className="flex w-[30px] justify-center">
      <svg width="20" height="12" viewBox="0 0 20 12"><rect x="0.500" y="0.500" width="17" height="11" fill="none" stroke="#111" /><rect x="2" y="2" width="5" height="8" fill="#111" /><rect x="18" y="4" width="2" height="4" fill="#111" /></svg>
    </div>
    <div className="flex w-[31px] justify-center">
      <svg width="18" height="16" viewBox="0 0 18 16"><path d="M1 15A13 13 0 0 1 14 1M4.500 15A9.500 9.500 0 0 1 14 5.500" fill="none" stroke="#999" /><path d="M8 15a5.500 5.500 0 0 1 6-5.500" fill="none" stroke="#222" /><rect x="12.500" y="12.500" width="2.500" height="2.500" fill="#111" /></svg>
    </div>
    <div className="flex w-[30px] justify-center">
      <svg width="20" height="18" viewBox="0 0 20 18"><path d="M1 6h3l5-4.500v15L4 12H1z" fill="none" stroke="#222" /><path d="M12 6a4 4 0 0 1 0 6M15 3.500a7.500 7.500 0 0 1 0 11M17.500 1.500a10.500 10.500 0 0 1 0 15" fill="none" stroke="#222" /></svg>
    </div>
    <span className="ml-[8px] w-[30px] text-[15px]">SWE</span>
    <div className="ml-[13px] flex w-[80px] flex-col items-center text-[15px] leading-[24px]"><span>19:49</span><span>2024-03-23</span></div>
    <div className="relative ml-[14px] h-[34px] w-[34px]">
      <svg width="20" height="20" viewBox="0 0 20 20" className="ml-[8px]"><path d="M0 0h20v17H6l-3 3v-3H0z" fill="#000" /><path d="M4 5h12M4 9h12M4 13h8" stroke="#fff" /></svg>
      <span className="absolute bottom-[-2px] right-[-2px] flex h-[23px] w-[23px] items-center justify-center rounded-full border border-[#777] bg-[#c7c7c7] text-[14px] text-black">21</span>
    </div>
    <div className="ml-auto mr-[4px] h-full w-[1px] bg-[#c9b8b8]" />
  </div>
);

export default function App() {
  return (
    <div className="relative flex h-screen w-[1920px] flex-col overflow-hidden bg-white font-['Open_Sans',sans-serif]">
      <OfficeOrb />
      <Qat />
      <div className="flex h-[30px] shrink-0 items-center bg-white">
        <svg width="8" height="10" viewBox="0 0 8 10" className="ml-[165px]"><path d="M1 1h6M0 4h8L4 9z" fill="#4a5b7c" stroke="#4a5b7c" strokeWidth="0.6" /></svg>
        <span className="ml-[607px] whitespace-nowrap text-[14px] text-[#444]">dator uppgift 6 [kompatibilitetsläge] - Microsoft Word</span>
        <div className="-mt-[2px] ml-auto mr-[3px] flex items-center">
          <div className="flex w-[58px] justify-center"><CaptionMin color="#999" /></div>
          <div className="flex w-[58px] justify-center"><CaptionRestore color="#999" /></div>
          <div className="flex w-[58px] justify-center"><CaptionClose color="#999" /></div>
        </div>
      </div>
      <div className="flex h-[28px] shrink-0 items-end bg-[#bfdbff] pl-[60px] text-[12.5px] text-[#2b5b9f]">
        <div className="flex h-[26px] w-[49px] items-center justify-center rounded-t-[3px] border border-b-0 border-[#9fc0e6] bg-gradient-to-b from-[#f5f9fe] to-[#dbe8f9] pt-[3px] text-[#15428b]">Start</div>
        <div className="ml-[2px] flex h-[26px] items-center pt-[3px]">
          {tabs.map((t) => <div key={t.label} className={`${t.cls} text-center`}>{t.label}</div>)}
        </div>
        <div className="ml-auto mr-[4px] flex h-[28px] items-center">
          <div className="flex h-[16px] w-[16px] items-center justify-center rounded-full border border-[#7ba7de] bg-[#2e66b8] text-[11px] font-bold leading-none text-white">?</div>
        </div>
      </div>
      <Ribbon />
      <DocArea />
      <StatusBar />
      <Taskbar />
    </div>
  );
}
